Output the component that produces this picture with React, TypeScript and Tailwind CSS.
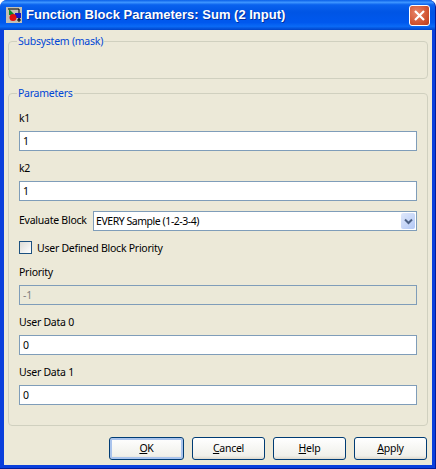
import { ReactNode } from "react";

const FONT = "font-['Noto_Sans',Arial,sans-serif]";

function Field({ label, value, disabled }: { label: string; value: string; disabled?: boolean }) {
  return (
    <div className="flex flex-col">
      <div className="flex h-[30px] items-start pt-[11px] text-[10.5px] leading-[13px] text-black">{label}</div>
      <div
        className={`flex h-[20px] items-center border border-[#7f9db9] px-[3px] pt-[1px] text-[10.5px] ${
          disabled ? "bg-[#ebe9d8] text-[#808080]" : "bg-white text-black"
        }`}
      >
        {value}
      </div>
    </div>
  );
}

function Group({ title, className, children }: { title: string; className: string; children?: ReactNode }) {
  return (
    <fieldset className={`rounded-[4px] border border-[#d0d0bf] ${className}`}>
      <legend className="ml-[8px] px-[1px] text-[10.5px] leading-[13px] text-[#0046d5]">{title}</legend>
      {children}
    </fieldset>
  );
}

function Btn({ children, isDefault, w }: { children: ReactNode; isDefault?: boolean; w: string }) {
  return (
    <button
      className={`flex h-[23px] items-center justify-center rounded-[3px] border border-[#003c74] bg-[linear-gradient(180deg,#ffffff,#f0f0ea_85%,#dcd8cc)] text-[10.5px] text-black ${w} ${
        isDefault ? "shadow-[inset_0_0_0_2px_#a9c3ec]" : ""
      }`}
    >
      {children}
    </button>
  );
}

export default function App() {
  return (
    <div
      className={`flex h-[469px] w-[436px] flex-col overflow-hidden rounded-t-[7px] border-r border-b border-[#001c9c] bg-[#0a3fdc] tracking-[-0.25px] ${FONT}`}
    >
      <div className="flex h-[30px] shrink-0 items-center bg-[linear-gradient(180deg,#0a5fe8_0%,#3d95ff_8%,#0a62ee_16%,#0055e5_40%,#0058ee_75%,#0a6af6_88%,#0043c8_100%)] pl-[6px] pr-[5px]">
        <svg width="16" height="16" viewBox="0 0 16 16" className="shrink-0">
          <rect width="16" height="16" fill="#c4c0b4" />
          <path d="M2 2h11v11" fill="none" stroke="#000" />
          <rect x="9" y="6" width="6" height="5" fill="#1616c8" />
          <path d="M3 2l6 6H3z" fill="#0a8a2a" />
          <circle cx="7" cy="10.5" r="3.5" fill="#e01010" />
          <path d="M13 11v4M11 13h4" stroke="#000" />
        </svg>
        <span className="ml-[4px] flex-1 font-['Liberation_Sans',Arial,sans-serif] text-[13px] font-bold tracking-normal text-white [text-shadow:1px_1px_0_#0030a0]">
          Function Block Parameters: Sum (2 Input)
        </span>
        <div className="flex h-[21px] w-[21px] items-center justify-center rounded-[3px] border border-white bg-[radial-gradient(circle_at_35%_35%,#e8856a,#d0522f_65%,#b83c1c)]">
          <svg width="13" height="13" viewBox="0 0 13 13">
            <path d="M2 2l9 9M11 2l-9 9" stroke="#fff" strokeWidth="2.2" />
          </svg>
        </div>
      </div>

      <div className="ml-[4px] mr-[3px] mb-[3px] flex flex-1 flex-col bg-[#ece9d8] pl-[4px] pr-[4px]">
        <Group title="Subsystem (mask)" className="mt-[5px] h-[44px]" />

        <Group title="Parameters" className="mt-[8px] h-[339px]">
          <div className="mt-[1px] px-[10px]">
            <Field label="k1" value="1" />
            <Field label="k2" value="1" />

            <div className="mt-[10px] flex h-[20px] items-center">
              <span className="w-[74px] text-[10.5px] text-black">Evaluate Block</span>
              <div className="flex h-[20px] flex-1 items-center justify-between border border-[#7f9db9] bg-white pl-[2px] pr-[1px] text-[10.5px] tracking-[-0.45px] text-black">
                <span className="pt-[1px]">EVERY Sample (1-2-3-4)</span>
                <div className="flex h-[16px] w-[14px] items-center justify-center rounded-[2px] bg-[linear-gradient(135deg,#dfe8fb,#b3c8f5)]">
                  <svg width="9" height="7" viewBox="0 0 9 7">
                    <path d="M1 1.5l3.5 3.5L8 1.5" fill="none" stroke="#4d6185" strokeWidth="2" />
                  </svg>
                </div>
              </div>
            </div>

            <div className="mt-[10px] flex h-[14px] items-start">
              <div className="h-[13px] w-[13px] border border-[#1c5180] bg-[linear-gradient(135deg,#dcdcd7,#ffffff)]" />
              <span className="ml-[5px] pt-[1px] text-[10.5px] leading-[13px] text-black">User Defined Block Priority</span>
            </div>

            <Field label="Priority" value="-1" disabled />
            <Field label="User Data 0" value="0" />
            <Field label="User Data 1" value="0" />
          </div>
        </Group>

        <div className="mt-[11px] flex gap-[8px] pl-[101px]">
          <Btn isDefault w="w-[75px]">
            <span><u>O</u>K</span>
          </Btn>
          <Btn w="w-[73px]">
            <span><u>C</u>ancel</span>
          </Btn>
          <Btn w="w-[73px]">
            <span><u>H</u>elp</span>
          </Btn>
          <Btn w="w-[73px]">
            <span><u>A</u>pply</span>
          </Btn>
        </div>
      </div>
    </div>
  );
}
